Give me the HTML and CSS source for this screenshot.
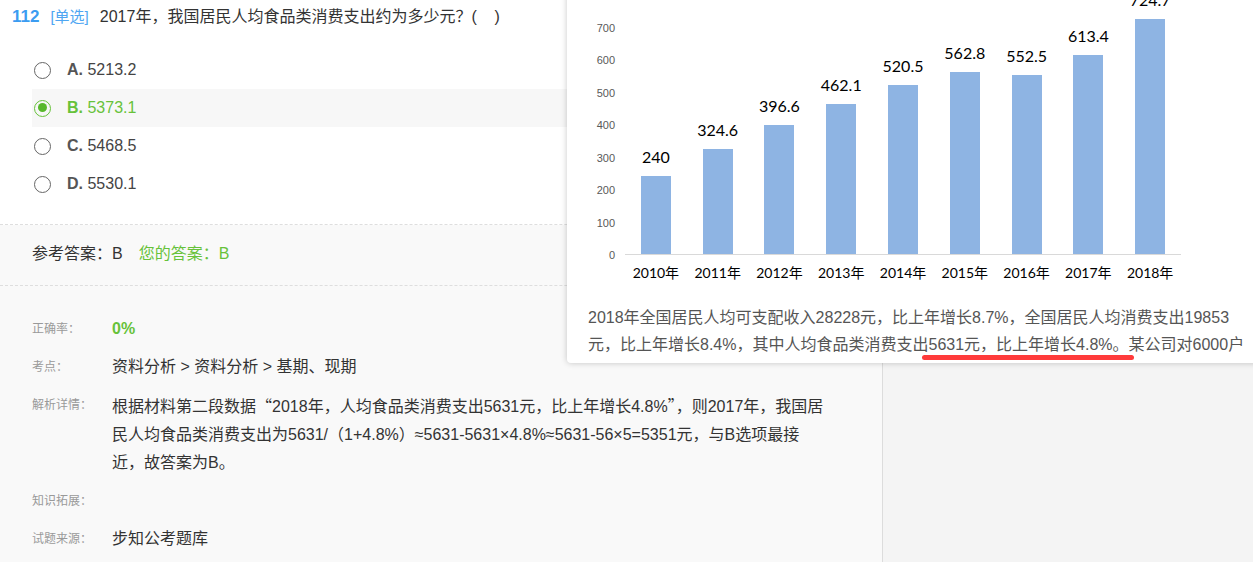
FILE: index.html
```html
<!DOCTYPE html>
<html lang="zh-CN">
<head>
<meta charset="utf-8">
<title>112 单选</title>
<link rel="stylesheet" href="styles.css">
</head>
<body>
<div class="page">
  <div class="main">
    <section class="question">
      <div class="q-head">
        <span class="q-num">112</span>
        <span class="q-type">[单选]</span>
        <span class="q-text">2017年，我国居民人均食品类消费支出约为多少元？(&nbsp;&nbsp;&nbsp;&nbsp;)</span>
      </div>
      <ul class="options">
        <li class="opt"><span class="radio"></span><b class="letter">A.</b>&nbsp;5213.2</li>
        <li class="opt on"><span class="radio"></span><b class="letter">B.</b>&nbsp;5373.1</li>
        <li class="opt"><span class="radio"></span><b class="letter">C.</b>&nbsp;5468.5</li>
        <li class="opt"><span class="radio"></span><b class="letter">D.</b>&nbsp;5530.1</li>
      </ul>
    </section>
    <section class="answer">
      <span class="ref">参考答案：B</span><span class="mine">您的答案：B</span>
    </section>
    <section class="analysis">
      <div class="label">正确率：</div>
      <div class="val rate">0%</div>
      <div class="label">考点：</div>
      <div class="val">资料分析 &gt; 资料分析 &gt; 基期、现期</div>
      <div class="label">解析详情：</div>
      <div class="val">根据材料第二段数据<span class="cjk">“</span>2018年，人均食品类消费支出5631元，比上年增长4.8%<span class="cjk">”</span>，则2017年，我国居民人均食品类消费支出为5631/（1+4.8%）≈5631-5631×4.8%≈5631-56×5=5351元，与B选项最接近，故答案为B。</div>
      <div class="label">知识拓展：</div>
      <div class="val"></div>
      <div class="label">试题来源：</div>
      <div class="val">步知公考题库</div>
    </section>
  </div>
  <aside class="side"></aside>

  <div class="popup">
    <div class="chart">
      <div class="yaxis">
        <span>700</span><span>600</span><span>500</span><span>400</span><span>300</span><span>200</span><span>100</span><span>0</span>
      </div>
      <div class="plot">
        <div class="col"><span class="num">240</span><span class="bar" style="height:77.8px"></span></div>
        <div class="col"><span class="num">324.6</span><span class="bar" style="height:105.3px"></span></div>
        <div class="col"><span class="num">396.6</span><span class="bar" style="height:128.6px"></span></div>
        <div class="col"><span class="num">462.1</span><span class="bar" style="height:149.9px"></span></div>
        <div class="col"><span class="num">520.5</span><span class="bar" style="height:168.8px"></span></div>
        <div class="col"><span class="num">562.8</span><span class="bar" style="height:182.5px"></span></div>
        <div class="col"><span class="num">552.5</span><span class="bar" style="height:179.2px"></span></div>
        <div class="col"><span class="num">613.4</span><span class="bar" style="height:198.9px"></span></div>
        <div class="col"><span class="num">724.7</span><span class="bar" style="height:235px"></span></div>
      </div>
      <div class="years">
        <span>2010年</span><span>2011年</span><span>2012年</span><span>2013年</span><span>2014年</span><span>2015年</span><span>2016年</span><span>2017年</span><span>2018年</span>
      </div>
    </div>
    <p class="material">2018年全国居民人均可支配收入28228元，比上年增长8.7%，全国居民人均消费支出19853<br>元，比上年增长8.4%，其中人均食品类消费支出<span class="mark">5631元，比上年增长4.8%。</span>某公司对6000户</p>
  </div>
</div>
</body>
</html>
```

FILE: styles.css
```css
html, body {
  margin: 0;
  padding: 0;
}

body {
  font-family: "Liberation Sans", "Noto Sans CJK SC", sans-serif;
  color: #333;
  background: #f4f4f4;
  overflow: hidden;
}

.page {
  position: relative;
  display: flex;
  height: 562px;
  overflow: hidden;
}

.main {
  width: 882px;
  flex: none;
  background: #f9f9f9;
  border-right: 1px solid #dcdcdc;
}

.side {
  flex: 1;
  background: #f4f4f4;
}

/* question */
.question {
  background: #fff;
  padding: 5px 0 21px;
  border-bottom: 1px dashed #dedede;
}

.q-head {
  display: flex;
  align-items: baseline;
  padding-left: 12px;
  line-height: 24px;
  font-size: 16px;
}

.q-num {
  font-size: 17px;
  font-weight: bold;
  color: #3b9cf1;
  margin-right: 11px;
}

.q-type {
  font-size: 15px;
  color: #4ea6f2;
  margin-right: 11px;
}

.q-text {
  color: #333;
}

.options {
  list-style: none;
  margin: 22px 0 0 32px;
  padding: 0;
}

.opt {
  display: flex;
  align-items: center;
  height: 38px;
  padding-left: 2px;
  font-size: 16px;
  color: #444;
}

.opt .letter {
  color: #555;
}

.radio {
  position: relative;
  width: 17px;
  height: 17px;
  box-sizing: border-box;
  border: 1.5px solid #666;
  border-radius: 50%;
  margin-right: 16px;
  flex: none;
}

.opt.on {
  background: #f7f7f7;
  color: #67c23a;
}

.opt.on .letter {
  color: #67c23a;
}

.opt.on .radio {
  border-color: #67c23a;
}

.opt.on .radio::after {
  content: "";
  position: absolute;
  left: 2.5px;
  top: 2.5px;
  width: 9px;
  height: 9px;
  border-radius: 50%;
  background: #58b82c;
}

/* answer */
.answer {
  padding: 15px 32px 17px;
  line-height: 28px;
  font-size: 16px;
  border-bottom: 1px dashed #dedede;
}

.mine {
  color: #67c23a;
  margin-left: 16px;
}

/* analysis */
.analysis {
  display: grid;
  grid-template-columns: 80px 717px;
  row-gap: 10px;
  padding: 29px 0 0 32px;
}

.label {
  font-size: 12px;
  line-height: 28px;
  color: #999;
}

.val {
  font-size: 16px;
  line-height: 28px;
  color: #333;
  min-height: 28px;
}

.val.rate {
  color: #67c23a;
  font-weight: bold;
}

.cjk {
  font-family: "Noto Sans CJK SC", sans-serif;
}

/* popup material */
.popup {
  position: absolute;
  left: 567px;
  top: -20px;
  right: -20px;
  height: 383px;
  background: #fff;
  border-radius: 4px;
  box-shadow: 0 0 6px rgba(0, 0, 0, 0.22);
}

.chart {
  display: grid;
  grid-template-columns: 58px 556px;
  grid-template-rows: 245px auto;
  margin-top: 30px;
}

.yaxis {
  grid-column: 1;
  grid-row: 1 / span 2;
  align-self: start;
  display: flex;
  flex-direction: column;
  justify-content: space-between;
  align-items: flex-end;
  height: 239px;
  margin-top: 12px;
  padding-right: 10px;
  font-size: 11px;
  line-height: 12px;
  color: #595959;
}

.plot {
  grid-column: 2;
  grid-row: 1;
  display: flex;
  align-items: flex-end;
  border-bottom: 1px solid #d9d9d9;
}

.col {
  flex: 1;
  display: flex;
  flex-direction: column;
  align-items: center;
  justify-content: flex-end;
}

.num {
  font-family: Lato, "Liberation Sans", sans-serif;
  font-size: 16px;
  line-height: 16px;
  color: #000;
  margin-bottom: 11px;
}

.bar {
  display: block;
  width: 30px;
  background: #8eb4e3;
}

.years {
  grid-column: 2;
  grid-row: 2;
  display: flex;
  padding-top: 8px;
  font-family: Lato, "Noto Sans CJK SC", sans-serif;
  font-size: 14px;
  line-height: 20px;
  color: #000;
}

.years span {
  flex: 1;
  text-align: center;
}

.material {
  margin: 21px 0 0;
  padding: 0 21px;
  font-size: 16px;
  line-height: 27px;
  color: #555;
  white-space: nowrap;
}

.mark {
  position: relative;
}

.mark::after {
  content: "";
  position: absolute;
  left: -6px;
  right: -5px;
  top: calc(100% + 2px);
  height: 5px;
  border-radius: 3px;
  background: #ff3b3b;
}
```
